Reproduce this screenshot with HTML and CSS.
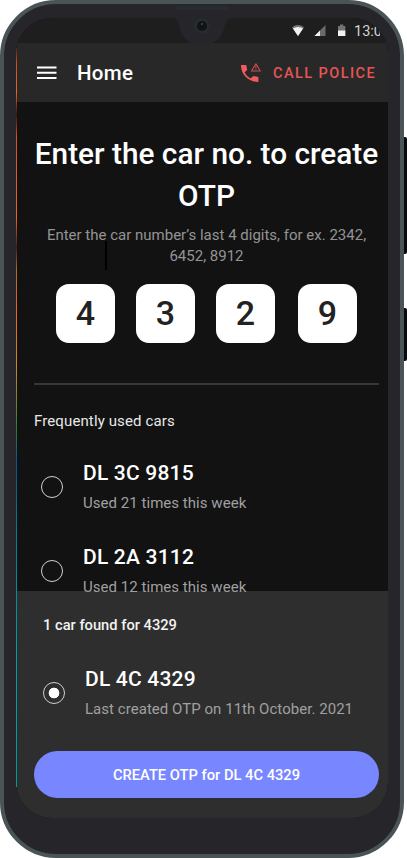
FILE: index.html
```html
<!DOCTYPE html>
<html lang="en">
<head>
<meta charset="utf-8">
<title>Home</title>
<link rel="stylesheet" href="styles.css">
</head>
<body>
<div class="phone">
  <span class="side-key side-key-volume"></span>
  <span class="side-key side-key-power"></span>
  <span class="edge-glow"></span>
  <div class="screen">
    <div class="status-bar">
      <svg class="status-icons" width="56" height="14" viewBox="0 0 56 14">
        <path d="M0 3.200Q6-1.200 12 3.200L6 12Z" fill="#777"/>
        <path d="M.9 4.500Q6 1.400 11.100 4.500L6 12Z" fill="#f2f2f2"/>
        <path d="M33.500 1v11H22.500Z" fill="#6b6b6b"/>
        <path d="M28 6.500v5.500H22.500Z" fill="#f2f2f2"/>
        <path d="M46 2h2V.5h3.300V2h2v10H46Z" fill="#737373"/>
        <path d="M46 6.500h7.300v5.500H46Z" fill="#f2f2f2"/>
      </svg>
      <span class="clock">13:0</span>
    </div>
    <header class="app-bar">
      <svg class="menu-icon" width="20" height="14" viewBox="0 0 20 14"><path d="M0 1.500h19.500M0 6.700h19.500M0 12h19.500" stroke="#fff" stroke-width="1.900"/></svg>
      <h1 class="page-name">Home</h1>
      <a class="call-police">
        <svg width="22" height="20" viewBox="0 0 22 20" fill="none">
          <path d="M1 2h5.200l1 4.700-2.600 2.900c1.500 2.700 3.300 4.500 6 6l2.800-2.700 5 1.100v4.900C9 19.200.7 11.500 1 2Z" fill="#f15b5b"/>
          <path d="M15.900.9 20.300 8H11.500Z" stroke="#c94e4e" stroke-width="1.100" stroke-linejoin="round"/>
          <path d="M15.900 3v2.700M15.900 6.200v1" stroke="#c94e4e" stroke-width=".9"/>
        </svg>
        <span class="call-label">CALL POLICE</span>
      </a>
    </header>
    <main class="content">
      <h2 class="title">Enter the car no. to create<br>OTP</h2>
      <p class="hint">Enter the car number’s last 4 digits, for ex. 2342,<br>6452, 8912<span class="caret"></span></p>
      <div class="digits">
        <span class="digit">4</span>
        <span class="digit">3</span>
        <span class="digit">2</span>
        <span class="digit">9</span>
      </div>
      <hr class="rule">
      <h3 class="section-name">Frequently used cars</h3>
      <div class="car">
        <span class="radio"></span>
        <div><div class="plate">DL 3C 9815</div><div class="note">Used 21 times this week</div></div>
      </div>
      <div class="car">
        <span class="radio"></span>
        <div><div class="plate">DL 2A 3112</div><div class="note">Used 12 times this week</div></div>
      </div>
    </main>
    <section class="sheet">
      <h3 class="found">1 car found for 4329</h3>
      <div class="car car-found">
        <span class="radio radio-on"></span>
        <div><div class="plate">DL 4C 4329</div><div class="note">Last created OTP on 11th October. 2021</div></div>
      </div>
      <button class="create">CREATE OTP for DL 4C 4329</button>
    </section>
  </div>
  <svg class="notch" width="66" height="44" viewBox="0 0 66 44">
    <path d="M0 17.500C9 18 9 22 11 29c2 9 9 14.500 16 14.500h12c7 0 14-5.500 16-14.500 2-7 2-11 11-11.500Z" fill="#25252a"/>
    <path d="M5 6h56q-1 4-4 4H9q-3 0-4-4Z" fill="#272b2f"/>
    <circle cx="33" cy="26" r="8" fill="#252b2e"/>
    <circle cx="33" cy="26" r="5" fill="#101416"/>
    <circle cx="33" cy="24" r="1" fill="#42484a"/>
  </svg>
</div>
</body>
</html>
```

FILE: styles.css
```css
* { box-sizing: border-box; }

body {
  margin: 0;
  background: #fff;
  font-family: Roboto, "Liberation Sans", sans-serif;
  color: #fff;
  overflow: hidden;
}

h1, h2, h3, p { margin: 0; }

.phone {
  position: relative;
  width: 404px;
  height: 858px;
  padding: 14px 12px 36px;
  border: 4px solid #4a5356;
  border-radius: 56px;
  background: #25252a;
}

.side-key {
  position: absolute;
  left: 400px;
  width: 3px;
  background: #070b0d;
  border-radius: 0 2px 2px 0;
}
.side-key-volume { top: 133px; height: 117px; }
.side-key-power { top: 304px; height: 53px; }

.edge-glow {
  position: absolute;
  z-index: 2;
  left: 12px;
  top: 44px;
  width: 1px;
  height: 739px;
  background: linear-gradient(#5a2010, #c9501c 2%, #f0641e 6%, #42120c 9%, #d9531e 12%, #f0641e 23%, #45201f 27%, #b56a20 30%, #f0641e 36%, #c98a28 43%, #2a7a40 52%, #0a5490 56%, #067a90 65%, #00a0a0 82%, #009a98);
}

.screen {
  display: flex;
  flex-direction: column;
  width: 372px;
  height: 800px;
  border-radius: 36px;
  overflow: hidden;
  background: #121212;
}

.status-bar {
  display: flex;
  align-items: center;
  flex: 0 0 25px;
  padding-left: 276px;
  background: #1e1e1e;
}
.status-icons { margin-top: 1px; }
.clock {
  width: 26px;
  margin: 2px 0 0 6px;
  overflow: hidden;
  font-size: 14.5px;
  line-height: 20px;
  color: #d2d2d2;
}

.app-bar {
  display: flex;
  align-items: center;
  flex: 0 0 59px;
  padding-left: 21px;
  background: #282828;
}
.page-name {
  width: 163px;
  margin-left: 20px;
  font-size: 20.5px;
  font-weight: 500;
  letter-spacing: 0.3px;
}
.call-police { display: flex; align-items: center; }
.call-label {
  margin: 2px 0 0 11px;
  font-size: 14.5px;
  font-weight: 500;
  letter-spacing: 1.45px;
  color: #e65555;
  white-space: nowrap;
}

.content {
  position: relative;
  z-index: 1;
  flex: none;
  height: 489px;
  padding: 31px 9px 0 18px;
}
.title {
  margin: 0 -4px;
  font-size: 29.8px;
  font-weight: 500;
  line-height: 42px;
  text-align: center;
  white-space: nowrap;
}
.hint {
  position: relative;
  margin-top: 8px;
  font-size: 15px;
  line-height: 21px;
  text-align: center;
  white-space: nowrap;
  color: #949494;
}
.caret {
  position: absolute;
  left: 71px;
  top: 16px;
  width: 2px;
  height: 29px;
  background: #000;
}
.digits {
  display: flex;
  gap: 21px;
  margin: 17px 0 0 22px;
}
.digit {
  width: 59px;
  height: 59px;
  border-radius: 13px;
  background: #fff;
  color: #222;
  font-size: 34px;
  font-weight: 500;
  line-height: 59px;
  text-align: center;
}
.digit:last-child { margin-left: 2px; }
.rule {
  height: 2px;
  margin: 40px 0 0;
  border: 0;
  background: #373737;
}
.section-name {
  margin-top: 26px;
  font-size: 15px;
  font-weight: 400;
  line-height: 20px;
  letter-spacing: 0.12px;
  color: #e8e8e8;
}

.car {
  display: flex;
  align-items: center;
  height: 56px;
  padding-left: 7px;
  margin-top: 28px;
  white-space: nowrap;
}
.radio {
  width: 22px;
  height: 22px;
  margin-right: 20px;
  border: 1.5px solid #d0d0d0;
  border-radius: 50%;
}
.radio-on { background: radial-gradient(circle, #fff 5px, transparent 5.700px); }
.plate {
  font-size: 21px;
  font-weight: 500;
  line-height: 27px;
  letter-spacing: 0.2px;
}
.note {
  margin-top: 5px;
  font-size: 15px;
  line-height: 22px;
  letter-spacing: 0.04px;
  color: #a0a0a0;
}

.sheet {
  flex: 1;
  padding: 24px 9px 0 18px;
  background: #2e2e2e;
}
.found {
  margin-left: 9px;
  font-size: 14.7px;
  font-weight: 500;
  line-height: 20px;
  color: #f2f2f2;
}
.car-found { padding-left: 9px; margin-top: 30px; }
.create {
  display: block;
  width: 345px;
  height: 47px;
  margin-top: 30px;
  padding: 1px 0 0;
  border: 0;
  border-radius: 24px;
  background: #7887ff;
  color: #fff;
  font: 500 14.7px Roboto, sans-serif;
}

.notch {
  position: absolute;
  left: 165px;
  top: -4px;
}
```
